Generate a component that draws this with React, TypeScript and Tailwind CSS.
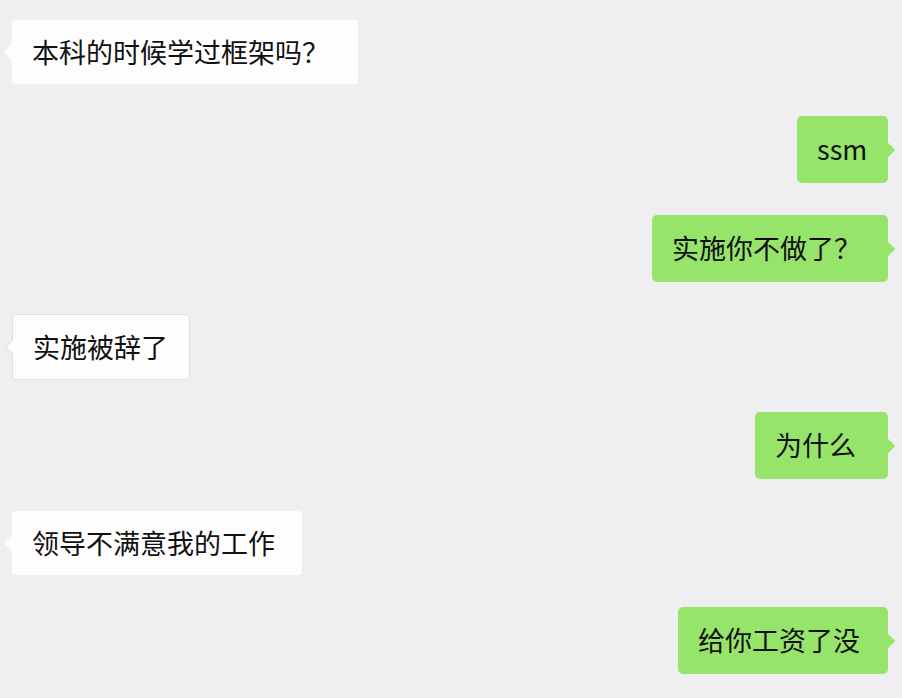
import React from 'react';

// One chat message: side decides colour and tail direction
interface Message {
    id: number;
    text: string;
    mine: boolean;
    width: string;
    height: string;
    bordered?: boolean;
}

const messages: Message[] = [
    { id: 1, text: '本科的时候学过框架吗？', mine: false, width: 'w-[346px]', height: 'h-[64px]' },
    { id: 2, text: 'ssm', mine: true, width: 'w-[91px]', height: 'h-[67px]' },
    { id: 3, text: '实施你不做了？', mine: true, width: 'w-[236px]', height: 'h-[67px]' },
    { id: 4, text: '实施被辞了', mine: false, width: 'w-[178px]', height: 'h-[66px]', bordered: true },
    { id: 5, text: '为什么', mine: true, width: 'w-[133px]', height: 'h-[67px]' },
    { id: 6, text: '领导不满意我的工作', mine: false, width: 'w-[290px]', height: 'h-[64px]' },
    { id: 7, text: '给你工资了没', mine: true, width: 'w-[210px]', height: 'h-[67px]' },
];

function Bubble({ message }: { message: Message }) {
    if (message.mine) {
        return (
            <div className="flex justify-end pr-[14px]">
                <div className={`relative flex items-center rounded-[5px] bg-[#97e46b] pl-[20px] text-[27px] text-[#111] ${message.width} ${message.height}`}>
                    <span>{message.text}</span>
                    <div className="absolute right-[-5px] top-1/2 h-[11px] w-[11px] -translate-y-1/2 rotate-45 bg-[#97e46b]" />
                </div>
            </div>
        );
    }

    return (
        <div className="flex justify-start pl-[12px]">
            <div
                className={`relative flex items-center rounded-[4px] bg-[#fdfdfd] pl-[20px] text-[27px] text-[#111] ${message.width} ${message.height} ${message.bordered ? 'border border-[#dedede]' : ''}`}
            >
                <span>{message.text}</span>
                <div
                    className={`absolute left-[-6px] top-1/2 h-[11px] w-[11px] -translate-y-1/2 rotate-45 bg-[#fdfdfd] ${message.bordered ? 'border-b border-l border-[#dedede]' : ''}`}
                />
            </div>
        </div>
    );
}

export default function App() {
    return (
        <div
            className="flex h-[698px] w-[902px] flex-col gap-[32px] overflow-hidden bg-[#efeff1] pt-[20px]"
            style={{ fontFamily: '"Noto Sans CJK SC", "Noto Sans", sans-serif' }}
        >
            {messages.map(message => (
                <Bubble key={message.id} message={message} />
            ))}
        </div>
    );
}
